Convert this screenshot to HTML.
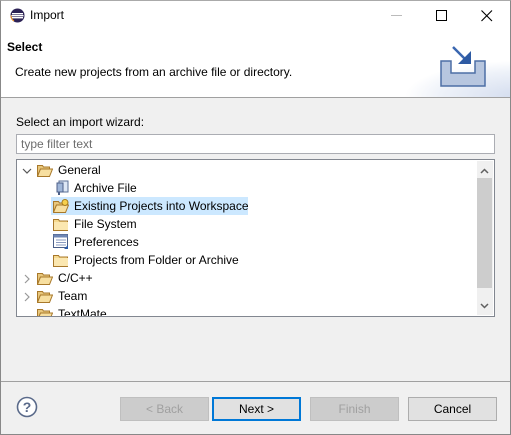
<!DOCTYPE html>
<html><head><style>
*{margin:0;padding:0;box-sizing:border-box}
body{width:511px;height:435px;background:#f0f0f0;font-family:"Liberation Sans",sans-serif;font-size:12px;color:#000;position:relative;overflow:hidden}
.abs{position:absolute}
.win{position:absolute;left:0;top:0;width:511px;height:435px;border:1px solid #888;border-top-color:#aaa}
.btn{position:absolute;top:397px;height:24px;width:89px;background:#e1e1e1;border:1px solid #adadad;text-align:center;line-height:22px;font-size:12px}
.dis{background:#cccccc;border-color:#bfbfbf;color:#a0a0a0}
.row{position:absolute;height:18px;line-height:18px;white-space:nowrap}
</style></head><body>
<div class="abs" style="left:0;top:0;width:511px;height:98px;background:#fff"></div>
<div class="abs" style="left:0;top:97px;width:511px;height:1px;background:#a0a0a0"></div>
<svg class="abs" style="left:300px;top:31px" width="210" height="66"><defs><radialGradient id="g" cx="1.05" cy="1" r="0.55"><stop offset="0" stop-color="#d3dcee"/><stop offset="0.7" stop-color="#eef2f9"/><stop offset="1" stop-color="#fff"/></radialGradient></defs><rect width="210" height="66" fill="url(#g)"/>
<path d="M141 30 h10 v12 h24 v-12 h10 v25 h-44z" fill="#b7c6df" stroke="#4d6fa5" stroke-width="1.5"/>
<path d="M153 16 L166 29" stroke="#3a66b0" stroke-width="2.5"/><path d="M158 33 L171 33 L171 20z" fill="#2d5aa3"/></svg>
<svg class="abs" style="left:10px;top:8px" width="15" height="15"><circle cx="7.5" cy="7.5" r="7" fill="#2c2255"/><rect x="2" y="5" width="11" height="1.4" fill="#fff"/><rect x="1.5" y="7" width="12" height="1.4" fill="#fff"/><rect x="2" y="9" width="11" height="1.4" fill="#fff"/><path d="M1 7.5 a6.5 6.5 0 0 0 3 5.5" stroke="#f7941e" fill="none"/></svg>
<div class="abs" style="left:30px;top:8px;font-size:12px">Import</div>
<div class="abs" style="left:391px;top:15px;width:11px;height:1px;background:#bbb"></div>
<div class="abs" style="left:436px;top:10px;width:11px;height:11px;border:1px solid #000"></div>
<svg class="abs" style="left:481px;top:10px" width="12" height="12"><path d="M0.5 .5 L11 11 M11 .5 L.5 11" stroke="#000" stroke-width="1.1"/></svg>
<div class="abs" style="left:7px;top:40px;font-weight:bold;font-size:12px">Select</div>
<div class="abs" style="left:15px;top:65px">Create new projects from an archive file or directory.</div>
<div class="abs" style="left:16px;top:115px">Select an import wizard:</div>
<div class="abs" style="left:16px;top:134px;width:479px;height:20px;background:#fff;border:1px solid #abadb3;color:#6d6d6d;padding-left:4px;line-height:18px">type filter text</div>
<div class="abs" style="left:16px;top:159px;width:479px;height:158px;background:#fff;border:1px solid #828790;overflow:hidden">
<div class="abs" style="left:460px;top:1px;width:16px;height:154px;background:#f0f0f0"></div>
<div class="abs" style="left:460px;top:18px;width:15px;height:110px;background:#cdcdcd"></div>
<svg class="abs" style="left:463px;top:8px" width="10" height="8"><path d="M1 5 L4.5 1.5 L8 5" stroke="#606060" stroke-width="1.5" fill="none"/></svg>
<svg class="abs" style="left:463px;top:142px" width="10" height="8"><path d="M1 2 L4.5 5.5 L8 2" stroke="#606060" stroke-width="1.5" fill="none"/></svg>
<div class="abs" style="left:34px;top:37px;width:197px;height:18px;background:#cce8ff"></div>
</div>
<svg width="0" height="0"><defs>
<symbol id="fo" viewBox="0 0 16 14"><path d="M.5 2.5h5l1 1.5h6v2h-9l-3 7z" fill="#e8c77c" stroke="#a8782a"/><path d="M.5 13.5l3-7.5h12l-3 7.5z" fill="#f7dfa0" stroke="#a8782a"/></symbol>
<symbol id="fc" viewBox="0 0 16 14"><path d="M.5 2.5h5l1 1.5h8v9.5h-14z" fill="#f5d98f" stroke="#a8782a"/><rect x="1" y="5" width="14" height="8" fill="#fbe7b0"/></symbol>
</defs></svg>
<div class="row" style="left:22px;top:161px"><svg width="10" height="8" style="vertical-align:middle"><path d="M1 2l4 4 4-4" stroke="#555" fill="none" stroke-width="1.2"/></svg></div>
<svg class="abs" style="left:37px;top:163px" width="16" height="14"><use href="#fo"/></svg>
<div class="row" style="left:58px;top:161px">General</div>
<svg class="abs" style="left:55px;top:180px" width="14" height="16"><rect x="4" y="1" width="9" height="11" fill="#dde7f5" stroke="#5a6f95"/><rect x="2" y="3" width="6" height="9" fill="#9fb6d8" stroke="#4c5f88"/><path d="M4 12v3" stroke="#4c5f88" stroke-width="2"/></svg>
<div class="row" style="left:74px;top:179px">Archive File</div>
<svg class="abs" style="left:53px;top:199px" width="16" height="14"><use href="#fo"/><circle cx="12" cy="3.5" r="3" fill="#f6d04d" stroke="#a77b1b"/></svg>
<div class="row" style="left:74px;top:197px">Existing Projects into Workspace</div>
<svg class="abs" style="left:53px;top:217px" width="16" height="14"><use href="#fc"/></svg>
<div class="row" style="left:74px;top:215px">File System</div>
<svg class="abs" style="left:53px;top:234px" width="16" height="16"><rect x=".5" y=".5" width="14" height="13" fill="#fff" stroke="#4a5e88"/><rect x=".5" y=".5" width="14" height="3" fill="#6e86b5"/><path d="M3 6h10M3 8.5h10M3 11h10" stroke="#8a9bc0"/><path d="M11 15l4-4v4z" fill="#2a5aa8"/></svg>
<div class="row" style="left:74px;top:233px">Preferences</div>
<svg class="abs" style="left:53px;top:253px" width="16" height="14"><use href="#fc"/></svg>
<div class="row" style="left:74px;top:251px">Projects from Folder or Archive</div>
<div class="row" style="left:22px;top:269px"><svg width="10" height="10" style="vertical-align:middle"><path d="M3 1l4 4-4 4" stroke="#999" fill="none" stroke-width="1.2"/></svg></div>
<svg class="abs" style="left:37px;top:271px" width="16" height="14"><use href="#fo"/></svg>
<div class="row" style="left:58px;top:269px">C/C++</div>
<div class="row" style="left:22px;top:287px"><svg width="10" height="10" style="vertical-align:middle"><path d="M3 1l4 4-4 4" stroke="#999" fill="none" stroke-width="1.2"/></svg></div>
<svg class="abs" style="left:37px;top:289px" width="16" height="14"><use href="#fo"/></svg>
<div class="row" style="left:58px;top:287px">Team</div>
<div class="abs" style="left:17px;top:305px;width:459px;height:11px;overflow:hidden"><svg class="abs" style="left:20px;top:2px" width="16" height="14"><use href="#fo"/></svg><div class="row" style="left:41px;top:0">TextMate</div></div>
<div class="abs" style="left:0;top:381px;width:511px;height:1px;background:#a0a0a0"></div>
<svg class="abs" style="left:16px;top:396px" width="22" height="22"><circle cx="11" cy="11" r="9.5" fill="#fff" stroke="#5a6a8a" stroke-width="1.6"/><text x="11" y="16" text-anchor="middle" font-family="Liberation Sans" font-weight="bold" font-size="14" fill="#5a6a8a">?</text></svg>
<div class="btn dis" style="left:120px">&lt; Back</div>
<div class="btn" style="left:212px;border:2px solid #0078d7;line-height:20px">Next &gt;</div>
<div class="btn dis" style="left:310px">Finish</div>
<div class="btn" style="left:408px">Cancel</div>
<div class="win"></div>
</body></html>
